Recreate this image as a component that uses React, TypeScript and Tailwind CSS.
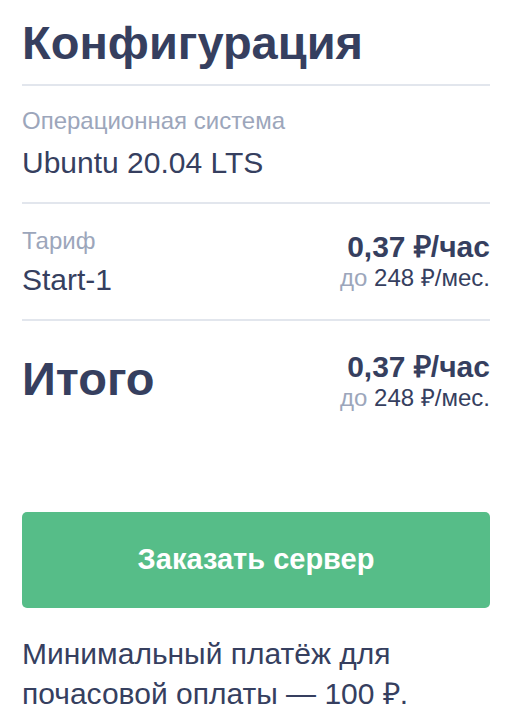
import React from "react";

function Price() {
  return (
    <div className="flex flex-col items-end">
      <div className="text-[30px] leading-[32px] font-bold text-[#363f5f]">0,37 ₽/час</div>
      <div className="mt-[1px] text-[24px] leading-[28px] text-[#363f5f]">
        <span className="text-[#9ca6bb]">до</span> 248 ₽/мес.
      </div>
    </div>
  );
}

export default function App() {
  return (
    <div
      className="w-[512px] h-[720px] bg-white px-[22px] text-[#363f5f] overflow-hidden"
      style={{ fontFamily: '"Liberation Sans", Arial, sans-serif' }}
    >
      <h1 className="text-[47px] leading-[56px] font-bold pt-[15px] pb-[13px] border-b-2 border-[#e2e6ed]">
        Конфигурация
      </h1>
      <div className="pt-[20px] pb-[21px] border-b-2 border-[#e2e6ed]">
        <div className="text-[24px] leading-[30px] text-[#9ca6bb]">Операционная система</div>
        <div className="text-[30px] leading-[36px] mt-[9px]">Ubuntu 20.04 LTS</div>
      </div>
      <div className="pt-[22px] pb-[21px] border-b-2 border-[#e2e6ed] flex justify-between items-start">
        <div>
          <div className="text-[24px] leading-[30px] text-[#9ca6bb]">Тариф</div>
          <div className="text-[30px] leading-[36px] mt-[6px]">Start-1</div>
        </div>
        <div className="pt-[5px]">
          <Price />
        </div>
      </div>
      <div className="pt-[30px] flex justify-between items-start">
        <div className="text-[47px] leading-[56px] font-bold">Итого</div>
        <Price />
      </div>
      <button className="mt-[100px] w-full h-[96px] rounded-[5px] bg-[#56bd88] text-white text-[29px] font-bold">
        Заказать сервер
      </button>
      <p className="mt-[26px] text-[30px] leading-[40px]">
        Минимальный платёж для
        <br />
        почасовой оплаты — 100 ₽.
      </p>
    </div>
  );
}
